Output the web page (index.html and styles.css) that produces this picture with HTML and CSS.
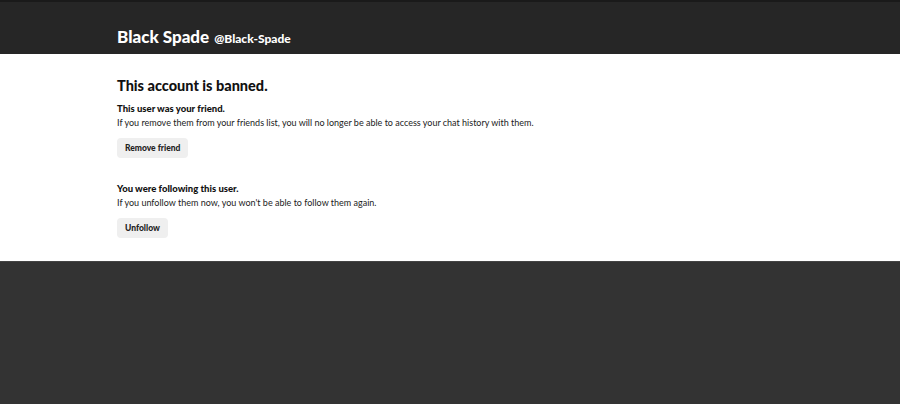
FILE: index.html
```html
<!DOCTYPE html>
<html>
<head>
    <meta charset="UTF-8">
    <title>Black Spade</title>
    <link rel="stylesheet" href="styles.css">
</head>
<body>
    <div class="header">
        <div class="inner">
            <span class="name">Black Spade</span>
            <span class="handle">@Black-Spade</span>
        </div>
    </div>
    <div class="content">
        <div class="inner">
            <h1>This account is banned.</h1>
            <div class="section">
                <h3>This user was your friend.</h3>
                <p>If you remove them from your friends list, you will no longer be able to access your chat history with them.</p>
                <button class="btn">Remove friend</button>
            </div>
            <div class="section">
                <h3>You were following this user.</h3>
                <p>If you unfollow them now, you won't be able to follow them again.</p>
                <button class="btn">Unfollow</button>
            </div>
        </div>
    </div>
    <div class="footer"></div>
</body>
</html>
```
FILE: styles.css
```css
body{margin:0;font-family:Lato,"Open Sans",sans-serif;background:#333;}
h1,h3,p{margin:0;}
.inner{padding-left:117px;}
.header{
    background:#262626;
    border-top:2px solid #1a1a1a;
    height:52px;
}
.header .inner{
    display:flex;
    align-items:baseline;
    gap:5px;
    padding-top:24px;
    color:#fff;
    font-weight:900;
}
.header .name{font-size:17px;}
.header .handle{font-size:12px;}
.content{
    background:#fff;
    height:207px;
}
.content .inner{padding-top:23px;}
.content h1{
    font-size:14.5px;
    font-weight:900;
    line-height:18px;
    color:#111;
    margin-bottom:7px;
}
.section h3{
    font-size:9.5px;
    font-weight:900;
    line-height:14px;
    color:#111;
}
.section p{
    font-size:9px;
    line-height:14px;
    color:#222;
    margin-bottom:8px;
}
.section + .section{margin-top:24px;}
.btn{
    display:block;
    font-family:Lato,sans-serif;
    font-size:8.5px;
    font-weight:900;
    color:#222;
    background:#efefef;
    border:none;
    border-radius:4px;
    height:20px;
    padding:0 8px;
}
.footer{
    border-top:1px solid #444;
    height:150px;
}
```
